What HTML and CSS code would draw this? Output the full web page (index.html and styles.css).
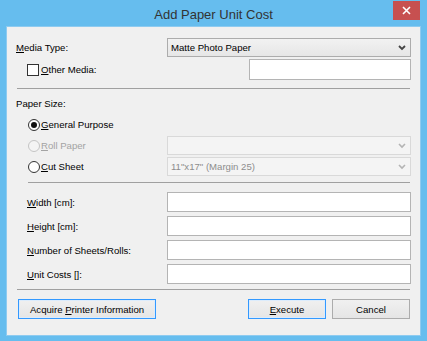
FILE: index.html
```html
<!DOCTYPE html>
<html lang="en">
<head>
  <meta charset="UTF-8" />
  <title>Add Paper Unit Cost</title>
  <link rel="stylesheet" href="styles.css">
</head>
<body>
  <div class="window">
    <div class="titlebar">
      <span></span>
      <span class="title">Add Paper Unit Cost</span>
      <button class="close" aria-label="Close">
        <svg width="9" height="9" viewBox="0 0 9 9"><path d="M1 1L8 8M8 1L1 8" stroke="#fff" stroke-width="1.6" fill="none"/></svg>
      </button>
    </div>

    <div class="client">
      <div class="row media">
        <span class="label"><u>M</u>edia Type:</span>
        <div class="select">
          <span>Matte Photo Paper</span>
          <svg class="chev" width="8" height="6" viewBox="0 0 8 6"><path d="M1 1L4 4L7 1" stroke="#444" stroke-width="1.8" fill="none"/></svg>
        </div>
      </div>
      <div class="row other">
        <label class="check"><span class="box"></span><u>O</u>ther Media:</label>
        <div class="input short"></div>
      </div>

      <div class="sep"></div>

      <div class="row caption"><span class="label">Paper Size:</span></div>
      <div class="radios">
        <div class="row radio-row">
          <label class="radio"><span class="dot on"></span><u>G</u>eneral Purpose</label>
        </div>
        <div class="row radio-row">
          <label class="radio disabled"><span class="dot"></span><u>R</u>oll Paper</label>
          <div class="select off">
            <span></span>
            <svg class="chev" width="8" height="6" viewBox="0 0 8 6"><path d="M1 1L4 4L7 1" stroke="#b4b4b4" stroke-width="1.6" fill="none"/></svg>
          </div>
        </div>
        <div class="row radio-row">
          <label class="radio"><span class="dot"></span><u>C</u>ut Sheet</label>
          <div class="select off">
            <span>11"x17" (Margin 25)</span>
            <svg class="chev" width="8" height="6" viewBox="0 0 8 6"><path d="M1 1L4 4L7 1" stroke="#b4b4b4" stroke-width="1.6" fill="none"/></svg>
          </div>
        </div>
      </div>

      <div class="sep inset"></div>

      <div class="fields">
        <div class="row field"><span class="label"><u>W</u>idth [cm]:</span><div class="input"></div></div>
        <div class="row field"><span class="label"><u>H</u>eight [cm]:</span><div class="input"></div></div>
        <div class="row field"><span class="label"><u>N</u>umber of Sheets/Rolls:</span><div class="input"></div></div>
        <div class="row field"><span class="label"><u>U</u>nit Costs []:</span><div class="input"></div></div>
      </div>

      <div class="sep"></div>

      <div class="buttons">
        <button class="btn wide focus">Acquire <u>P</u>rinter Information</button>
        <span class="spacer"></span>
        <button class="btn focus"><u>E</u>xecute</button>
        <button class="btn">Cancel</button>
      </div>
    </div>
  </div>
</body>
</html>
```

FILE: styles.css
```css
body {
  margin: 0;
  padding: 0;
  font-family: "Liberation Sans", Arial, sans-serif;
  font-size: 9.6px;
  color: #000;
}
.window {
  width: 427px;
  height: 341px;
  background: #66bdee;
  display: flex;
  flex-direction: column;
}
.titlebar {
  height: 27px;
  display: grid;
  grid-template-columns: 1fr auto 1fr;
  align-items: center;
}
.title {
  font-size: 13px;
  color: #333;
  padding-top: 1px;
}
.close {
  justify-self: end;
  align-self: start;
  margin: 1px 7px 0 0;
  width: 27px;
  height: 19px;
  border: none;
  padding: 0;
  background: #c75050;
  display: flex;
  align-items: center;
  justify-content: center;
}
.client {
  flex: 1;
  margin: 0 7px 6px 7px;
  padding: 11px 9px 0 9px;
  background: #f0f0f0;
  box-shadow: 0 0 0 1px #8ecbf0;
}
.row {
  display: flex;
  align-items: center;
  justify-content: space-between;
}
.media {
  height: 19px;
}
.other {
  height: 21px;
  margin-top: 2px;
}
.select {
  width: 244px;
  height: 19px;
  box-sizing: border-box;
  border: 1px solid #acacac;
  background: linear-gradient(#f2f2f2, #e6e6e6);
  display: flex;
  align-items: center;
  justify-content: space-between;
  padding: 0 4px 0 3px;
}
.select.off {
  background: #f4f4f4;
  border-color: #d9d9d9;
  color: #8d8d8d;
}
.input {
  width: 244px;
  height: 20px;
  box-sizing: border-box;
  background: #fff;
  border: 1px solid #b4b4b4;
}
.input.short {
  width: 162px;
  height: 21px;
}
.check,
.radio {
  display: flex;
  align-items: center;
  margin-left: 11px;
}
.box {
  width: 12px;
  height: 12px;
  box-sizing: border-box;
  border: 1px solid #333;
  background: #fff;
  margin-right: 2px;
}
.sep {
  height: 1px;
  background: #a0a0a0;
  margin: 8px 1px 0 1px;
}
.sep.inset {
  margin: 5px 1px 0 12px;
}
.caption {
  height: 14px;
  margin-top: 7px;
}
.radios {
  margin-top: 4px;
}
.radio-row {
  height: 21px;
}
.radio {
  margin-left: 12px;
}
.dot {
  width: 12px;
  height: 12px;
  box-sizing: border-box;
  border: 1px solid #333;
  border-radius: 50%;
  background: #fff;
  margin-right: 1px;
  display: flex;
  align-items: center;
  justify-content: center;
}
.dot.on::after {
  content: "";
  width: 6px;
  height: 6px;
  border-radius: 50%;
  background: #111;
}
.radio.disabled {
  color: #a3a3a3;
}
.radio.disabled .dot {
  border-color: #c4c4c4;
  background: #f4f4f4;
}
.fields {
  margin-top: 9px;
}
.field {
  height: 20px;
  margin-bottom: 4px;
}
.field .label {
  margin-left: 11px;
}
.fields + .sep {
  margin-top: 5px;
}
.buttons {
  display: flex;
  margin: 9px 1px 0 2px;
  gap: 6px;
}
.spacer {
  flex: 1;
}
.btn {
  width: 78px;
  height: 20px;
  box-sizing: border-box;
  border: 1px solid #acacac;
  background: linear-gradient(#f0f0f0, #e5e5e5);
  font-family: inherit;
  font-size: inherit;
  color: #000;
  padding: 0;
}
.btn.wide {
  width: 138px;
}
.btn.focus {
  border-color: #3399ff;
  box-shadow: inset 0 0 0 1px #dcecfc;
}
```
